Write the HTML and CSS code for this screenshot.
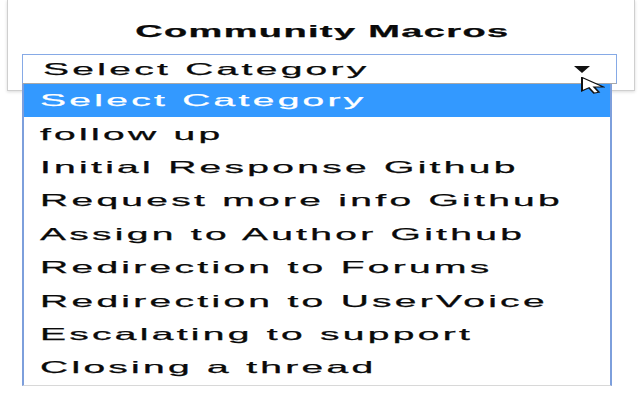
FILE: index.html
```html
<!DOCTYPE html>
<html>
<head>
<meta charset="utf-8">
<link rel="stylesheet" href="styles.css">
</head>
<body>
<div class="popup">
  <h1 class="title"><span class="sx">Community Macros</span></h1>
  <div class="select">
    <span class="sx">Select Category</span>
    <svg class="caret" viewBox="0 0 16 7" width="16" height="7"><polygon points="0,0 16,0 8,7" fill="#111"/></svg>
  </div>
</div>
<ul class="menu">
  <li class="active"><span class="sx">Select Category</span></li>
  <li><span class="sx">follow up</span></li>
  <li><span class="sx">Initial Response Github</span></li>
  <li><span class="sx">Request more info Github</span></li>
  <li><span class="sx">Assign to Author Github</span></li>
  <li><span class="sx">Redirection to Forums</span></li>
  <li><span class="sx">Redirection to UserVoice</span></li>
  <li><span class="sx">Escalating to support</span></li>
  <li><span class="sx">Closing a thread</span></li>
</ul>
<svg class="cursor" viewBox="0 0 12 19" width="24" height="17" preserveAspectRatio="none">
  <path d="M0.5,0.5 L0.5,15.5 L4,12 L6.5,18 L9,17 L6.5,11.2 L11.2,11.2 Z" fill="#fff" stroke="#111" stroke-width="1"/>
</svg>
</body>
</html>
```
FILE: styles.css
```css
html, body {
  margin: 0;
  padding: 0;
  background: #fff;
}
body {
  font-family: "Liberation Sans", Arial, sans-serif;
  color: #0a0a0a;
  width: 640px;
  height: 400px;
  overflow: hidden;
  position: relative;
}
.sx {
  display: inline-block;
  transform: scaleX(2.36);
  transform-origin: left center;
  letter-spacing: 1.4px;
  white-space: nowrap;
  -webkit-text-stroke: 0.25px currentColor;
}
.popup {
  margin-left: 7px;
  width: 628px;
  height: 91px;
  box-sizing: border-box;
  border: 1px solid #cfcfcf;
  border-top: 0;
  box-shadow: 0 1px 3px rgba(0, 0, 0, 0.15);
  padding: 0 17px 0 14px;
  display: flex;
  flex-direction: column;
}
.title {
  margin: 0;
  height: 54px;
  box-sizing: border-box;
  padding: 23px 0 0 6px;
  font-size: 16.5px;
  line-height: 16px;
  font-weight: bold;
  text-align: center;
}
.title .sx {
  transform: scaleX(2.3);
  transform-origin: center center;
  letter-spacing: 0.6px;
}
.select {
  height: 30px;
  box-sizing: border-box;
  border: 1px solid #86aae6;
  border-bottom-color: #a8a8a8;
  display: flex;
  align-items: center;
  padding-left: 20px;
  font-size: 16.5px;
}
.caret {
  margin-left: auto;
  margin-right: 26px;
}
.menu {
  position: absolute;
  left: 22px;
  top: 84px;
  width: 590px;
  height: 302px;
  box-sizing: border-box;
  margin: 0;
  padding: 0;
  list-style: none;
  background: #fff;
  border: 2px solid #7d9fdc;
  border-top: 0;
  border-bottom: 1px solid #d8d8d8;
  font-size: 16.5px;
}
.menu li {
  height: 33.4px;
  display: flex;
  align-items: center;
  padding-left: 16px;
}
.menu li.active {
  background: #3399ff;
  color: #fff;
}
.cursor {
  position: absolute;
  left: 581px;
  top: 77px;
}
```
